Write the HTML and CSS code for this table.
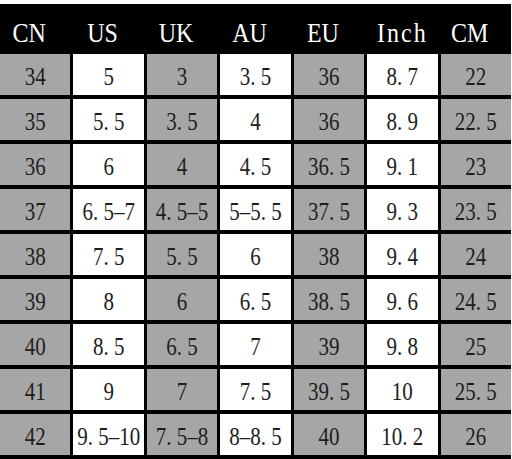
FILE: index.html
```html
<!DOCTYPE html>
<html>
<head>
<meta charset="utf-8">
<link rel="stylesheet" href="styles.css">
</head>
<body>
<div class="chart">
  <div class="head">
    <div class="h"><span>CN</span></div>
    <div class="h"><span>US</span></div>
    <div class="h"><span>UK</span></div>
    <div class="h"><span>AU</span></div>
    <div class="h"><span>EU</span></div>
    <div class="h h-inch"><span>Inch</span></div>
    <div class="h"><span>CM</span></div>
  </div>
  <div class="grid">
    <div class="c g"><span>34</span></div><div class="c w"><span>5</span></div><div class="c g"><span>3</span></div><div class="c w"><span>3. 5</span></div><div class="c g"><span>36</span></div><div class="c w"><span>8. 7</span></div><div class="c g"><span>22</span></div>
    <div class="c g"><span>35</span></div><div class="c w"><span>5. 5</span></div><div class="c g"><span>3. 5</span></div><div class="c w"><span>4</span></div><div class="c g"><span>36</span></div><div class="c w"><span>8. 9</span></div><div class="c g"><span>22. 5</span></div>
    <div class="c g"><span>36</span></div><div class="c w"><span>6</span></div><div class="c g"><span>4</span></div><div class="c w"><span>4. 5</span></div><div class="c g"><span>36. 5</span></div><div class="c w"><span>9. 1</span></div><div class="c g"><span>23</span></div>
    <div class="c g"><span>37</span></div><div class="c w"><span>6. 5–7</span></div><div class="c g"><span>4. 5–5</span></div><div class="c w"><span>5–5. 5</span></div><div class="c g"><span>37. 5</span></div><div class="c w"><span>9. 3</span></div><div class="c g"><span>23. 5</span></div>
    <div class="c g"><span>38</span></div><div class="c w"><span>7. 5</span></div><div class="c g"><span>5. 5</span></div><div class="c w"><span>6</span></div><div class="c g"><span>38</span></div><div class="c w"><span>9. 4</span></div><div class="c g"><span>24</span></div>
    <div class="c g"><span>39</span></div><div class="c w"><span>8</span></div><div class="c g"><span>6</span></div><div class="c w"><span>6. 5</span></div><div class="c g"><span>38. 5</span></div><div class="c w"><span>9. 6</span></div><div class="c g"><span>24. 5</span></div>
    <div class="c g"><span>40</span></div><div class="c w"><span>8. 5</span></div><div class="c g"><span>6. 5</span></div><div class="c w"><span>7</span></div><div class="c g"><span>39</span></div><div class="c w"><span>9. 8</span></div><div class="c g"><span>25</span></div>
    <div class="c g"><span>41</span></div><div class="c w"><span>9</span></div><div class="c g"><span>7</span></div><div class="c w"><span>7. 5</span></div><div class="c g"><span>39. 5</span></div><div class="c w"><span>10</span></div><div class="c g"><span>25. 5</span></div>
    <div class="c g"><span>42</span></div><div class="c w"><span>9. 5–10</span></div><div class="c g"><span>7. 5–8</span></div><div class="c w"><span>8–8. 5</span></div><div class="c g"><span>40</span></div><div class="c w"><span>10. 2</span></div><div class="c g"><span>26</span></div>
  </div>
</div>
</body>
</html>
```
FILE: styles.css
```css
html, body {
  margin: 0;
  padding: 0;
  background: #fff;
}
.chart {
  width: 511px;
  padding-top: 4px;
  font-family: "Liberation Serif", serif;
}
.head {
  background: #000;
  height: 50px;
  display: grid;
  grid-template-columns: repeat(7, 1fr);
  column-gap: 3px;
}
.h {
  display: flex;
  align-items: center;
  justify-content: center;
  padding-top: 9px;
  padding-right: 12px;
  color: #fff;
  font-size: 24px;
}
.h span {
  display: inline-block;
  transform: scaleY(1.15);
}
.h-inch {
  padding-right: 0;
  letter-spacing: 2px;
}
.grid {
  display: grid;
  grid-template-columns: repeat(7, 1fr);
  grid-auto-rows: 41px;
  column-gap: 3px;
  row-gap: 4px;
  background: #000;
  border-bottom: 4px solid #000;
}
.c {
  display: flex;
  align-items: center;
  justify-content: center;
  padding-top: 6px;
  font-size: 21px;
  color: #1e1e1e;
  white-space: nowrap;
  overflow: hidden;
}
.c span {
  display: inline-block;
  transform: scaleY(1.2);
}
.g { background: #a6a6a6; }
.w { background: #fff; }
```
